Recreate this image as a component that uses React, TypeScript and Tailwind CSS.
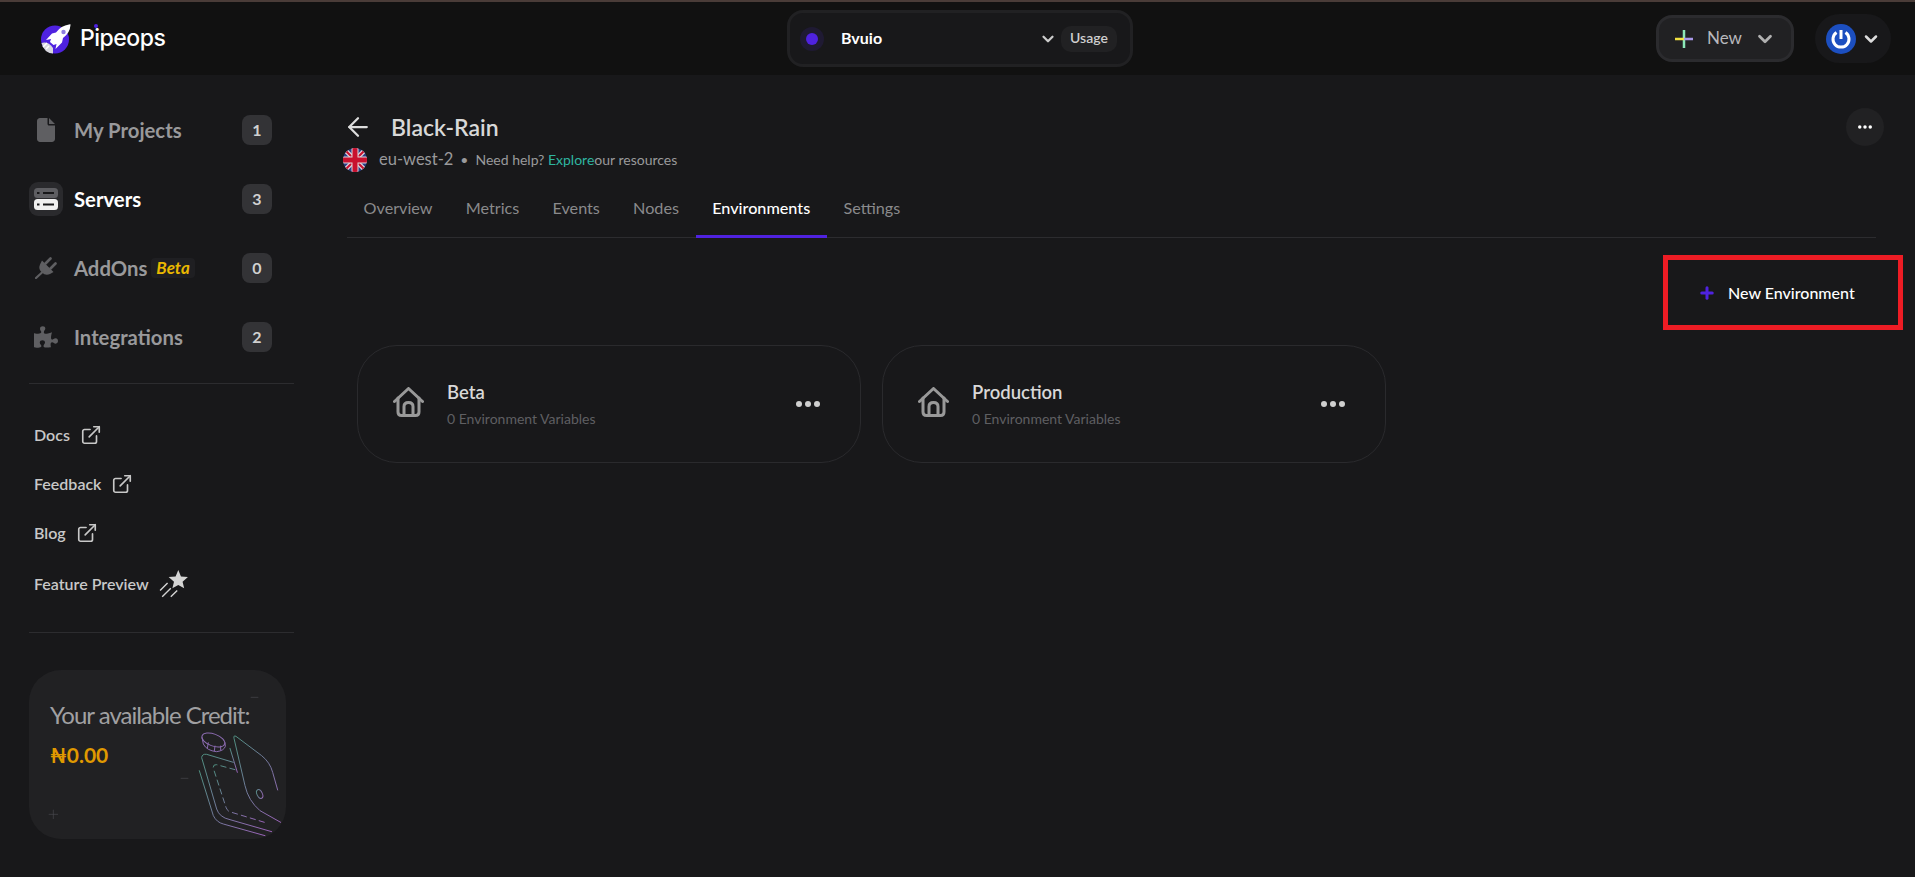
import React from 'react';
import { FaFile } from 'react-icons/fa6';
import { FaPuzzlePiece } from 'react-icons/fa';
import { ArrowLeft, ChevronDown, ExternalLink, Plus } from 'lucide-react';

const Dots: React.FC<{ className?: string }> = ({ className }) => (
  <svg viewBox="0 0 24 6" className={className} fill="currentColor">
    <circle cx="3" cy="3" r="3" />
    <circle cx="12" cy="3" r="3" />
    <circle cx="21" cy="3" r="3" />
  </svg>
);

const Logo = () => (
  <svg viewBox="0 0 32 30" className="w-[32px] h-[30px]">
    <circle cx="15" cy="15.500" r="14" fill="#4f22e0" />
    <path d="M1.500 19 Q8 17 13 24 L13 29.500 Q4 29 1.500 19Z" fill="#d8d8de" />
    <path d="M30.500 1 Q31 0 29 0.500 Q21 1.500 16 8.500 L12 9.500 L6 16 L11 15 L10 18 L13.500 21 L16.500 20 L15.500 25 L22 18.500 L23 14 Q30 9 30.500 1Z" fill="#fff" />
    <circle cx="23.500" cy="8" r="2.200" fill="#8f7fe0" />
    <path d="M7 19 L3 23 M9 22 L6 25" stroke="#fff" strokeWidth="1.500" />
  </svg>
);

const ServerIcon = () => (
  <svg viewBox="0 0 24 22" className="w-[24px] h-[22px]">
    <rect x="0" y="0" width="24" height="10" rx="3.500" fill="#5e5e62" />
    <rect x="0" y="11" width="24" height="11" rx="3.500" fill="#f0f0f0" />
    <rect x="3" y="4" width="2.500" height="2" fill="#18181a" />
    <rect x="9" y="4" width="11" height="2" fill="#18181a" />
    <rect x="3" y="15.500" width="2.500" height="2" fill="#18181a" />
    <rect x="9" y="15.500" width="11" height="2" fill="#18181a" />
  </svg>
);

const PlugIcon = () => (
  <svg viewBox="0 0 22 22" className="w-[22px] h-[22px]" fill="none">
    <path d="M7 3.500 L18.500 15 L15 17 Q10.500 19 7 15.500 Q3 12 5 7.500Z" fill="#5f5f62" />
    <path d="M10.500 6.500 L15.500 1.500 M15.500 11.500 L20.500 6.500" stroke="#5f5f62" strokeWidth="2.600" strokeLinecap="round" />
    <path d="M7 15.500 L1 21" stroke="#5f5f62" strokeWidth="2.200" strokeLinecap="round" />
  </svg>
);

const HomeIcon = () => (
  <svg viewBox="0 0 31 30" className="w-[31px] h-[30px] -mt-[4px] shrink-0" fill="none" stroke="#999999" strokeWidth="3" strokeLinejoin="round" strokeLinecap="round">
    <path d="M1.500 14.500 L15.500 1.500 L29.500 14.500" />
    <path d="M5 11 V25 Q5 28.500 8.500 28.500 H22.500 Q26 28.500 26 25 V11" />
    <path d="M11 28.500 V19.500 Q11 15.500 15.500 15.500 Q20 15.500 20 19.500 V28.500" />
  </svg>
);

const PowerAvatar = () => (
  <svg viewBox="0 0 30 30" className="w-[30px] h-[30px]">
    <circle cx="15" cy="15" r="15" fill="#1c4fc0" />
    <path d="M10.500 8.500 A8 8 0 1 0 19.500 8.500" fill="none" stroke="#fff" strokeWidth="3" />
    <path d="M15 6 L15 15" stroke="#fff" strokeWidth="3" />
  </svg>
);

const UkFlag = () => (
  <svg viewBox="0 0 24 24" className="w-[24px] h-[24px]">
    <defs>
      <clipPath id="flagclip">
        <circle cx="12" cy="12" r="12" />
      </clipPath>
    </defs>
    <g clipPath="url(#flagclip)">
      <rect width="24" height="24" fill="#2b3f86" />
      <path d="M0 0 L24 24 M24 0 L0 24" stroke="#e0d4da" strokeWidth="4.500" />
      <path d="M0 0 L24 24 M24 0 L0 24" stroke="#c8102e" strokeWidth="2" />
      <path d="M12 0 V24 M0 12 H24" stroke="#e0d4da" strokeWidth="7" />
      <path d="M12 0 V24 M0 12 H24" stroke="#c8102e" strokeWidth="5" />
    </g>
  </svg>
);

const StarTrail = () => (
  <svg viewBox="0 0 28 28" className="w-[30px] h-[30px]" fill="none">
    <path d="M18 1 L20.500 7 L27 7.500 L22 12 L23.500 18 L18 15 L12.500 18 L14 12 L9 7.500 L15.500 7Z" fill="#d4d4d4" />
    <path d="M1 20 L8 13 M3 26 L11 18 M11 26 L17 20" stroke="#d4d4d4" strokeWidth="1.300" />
  </svg>
);

const WalletArt = () => (
  <svg viewBox="87 63 771 507" className="absolute inset-0 w-full h-full pointer-events-none" fill="none" strokeWidth="3">
    <defs>
      <linearGradient id="walletline" x1="0" y1="0" x2="1" y2="1">
        <stop offset="0" stopColor="#4f8f80" />
        <stop offset="1" stopColor="#9a62b8" />
      </linearGradient>
    </defs>
    <g stroke="url(#walletline)" strokeLinecap="round">
      <path d="M690 298 L712 370" />
      <path d="M833 423 L818 370 Q810 340 785 320 L708 262 Q700 258 702 268 L735 410 Q745 455 780 485 L842 520" />
      <path d="M700 340 L620 316 Q606 314 605 326 L650 480 Q658 505 690 512 L815 548" />
      <path d="M598 365 L640 500 Q650 520 670 525 L795 560" />
      <path d="M705 362 L650 347 Q638 345 640 358 L678 475 Q682 488 695 490 L800 522" strokeDasharray="16 12" />
      <ellipse cx="779" cy="435" rx="8" ry="14" transform="rotate(-25 779 435)" />
    </g>
    <g stroke="#8b6bb0">
      <ellipse cx="640" cy="273" rx="36" ry="18" transform="rotate(20 640 273)" />
      <path d="M606 265 L610 285 Q620 305 650 308 Q672 305 676 292 L675 280" />
      <path d="M625 280 L622 298 M645 290 L643 307 M662 290 L662 304" />
    </g>
    <g stroke="#4a4a4e" strokeWidth="2">
      <path d="M160 482 V510 M146 496 H174" />
      <path d="M752 145 H775" />
      <path d="M542 388 H565" />
    </g>
  </svg>
);

const NavItem: React.FC<{ icon: React.ReactNode; label: string; count: number; active?: boolean; tag?: boolean }> = ({ icon, label, count, active, tag }) => (
  <div className="h-[69px] flex items-center">
    <div className="w-[34px] mr-[11px] flex justify-center">{icon}</div>
    <span className={`pt-[2px] text-[20.300px] font-bold ${active ? 'text-white' : 'text-[#99999b]'}`}>{label}</span>
    {tag && <span className="ml-[4px] h-[20px] px-[5px] rounded-[4px] bg-[#1f1f22] text-[#e9b800] text-[17px] font-bold italic leading-[20px]">Beta</span>}
    <span className="ml-auto mr-[22px] w-[30px] h-[30px] rounded-[8px] bg-[#333336] text-[#d0d0d0] text-[16px] font-bold flex items-center justify-center">{count}</span>
  </div>
);

const LinkItem: React.FC<{ label: string; icon?: React.ReactNode; className?: string }> = ({ label, icon, className }) => (
  <div className={`h-[49px] flex items-center gap-[10px] pl-[5px] text-[16px] font-semibold text-[#c8c8c8] ${className ?? ''}`}>
    <span>{label}</span>
    {icon ?? <ExternalLink className="w-[22px] h-[22px]" strokeWidth={1.8} />}
  </div>
);

const EnvCard: React.FC<{ name: string }> = ({ name }) => (
  <div className="w-[504px] h-[118px] rounded-[40px] border border-[#2a2a2d] bg-[#18181a] flex items-center pl-[35px] pr-[40px]">
    <HomeIcon />
    <div className="ml-[23px]">
      <div className="text-[18.500px] font-semibold text-[#d8d8d8] leading-[24px]">{name}</div>
      <div className="text-[14px] text-[#5f5f62] leading-[18px] mt-[6px]">0 Environment Variables</div>
    </div>
    <Dots className="ml-auto w-[24px] h-[6px] text-[#cfcfcf]" />
  </div>
);

export default function App() {
  const tabs = ['Overview', 'Metrics', 'Events', 'Nodes', 'Environments', 'Settings'];

  return (
    <div className="h-screen overflow-hidden bg-[#18181a] flex flex-col font-['Lato','Liberation_Sans',sans-serif]">
      <header className="h-[75px] shrink-0 bg-[#111111] border-t-2 border-[#4a3c38] flex items-center pl-[40px] pr-[24px]">
        <div className="flex items-center gap-[8px] w-[747px]">
          <Logo />
          <span className="relative text-[23px] font-medium text-white tracking-[-0.5px] font-['Inter',sans-serif]">
            Pipeops
            <span className="absolute left-[14px] top-[3px] w-[4px] h-[4px] rounded-full bg-[#4f22e0]" />
          </span>
        </div>
        <div className="w-[346px] h-[57px] rounded-[16px] border-[3px] border-[#212123] bg-[#18181a] flex items-center pl-[10px] pr-[13px]">
          <span className="w-[24px] h-[24px] rounded-full bg-[#1f1a33] flex items-center justify-center">
            <span className="w-[12px] h-[12px] rounded-full bg-[#4f22e0]" />
          </span>
          <span className="ml-[17px] pb-[2px] text-[16px] font-bold text-white">Bvuio</span>
          <ChevronDown className="ml-auto w-[18px] h-[18px] text-[#cccccc]" strokeWidth={3} />
          <span className="ml-[4px] w-[56px] h-[26px] pb-[2px] rounded-[10px] bg-[#212123] text-[14px] font-semibold text-[#cfcfcf] flex items-center justify-center">Usage</span>
        </div>
        <div className="ml-auto w-[138px] h-[47px] rounded-[16px] border-[3px] border-[#2b2b2e] bg-[#212123] flex items-center pl-[16px]">
          <svg viewBox="0 0 18 18" className="w-[18px] h-[18px]">
            <path d="M9 0 V18" stroke="#8ce8b8" strokeWidth="2.500" />
            <path d="M0 9 H9" stroke="#f0e040" strokeWidth="2.500" />
            <path d="M9 9 H18" stroke="#a898e8" strokeWidth="2.500" />
          </svg>
          <span className="ml-[14px] pb-[2px] text-[17px] text-[#b8b8bc]">New</span>
          <ChevronDown className="ml-[12px] w-[22px] h-[22px] text-[#b0b0b0]" strokeWidth={3} />
        </div>
        <div className="ml-[21px] w-[76px] h-[49px] rounded-full bg-[#18181a] flex items-center pl-[11px] gap-[5px]">
          <PowerAvatar />
          <ChevronDown className="w-[20px] h-[20px] text-[#dddddd]" strokeWidth={3} />
        </div>
      </header>

      <div className="flex-1 flex min-h-0">
        <aside className="w-[323px] shrink-0 pl-[29px] pr-[29px] pt-[20px]">
          <NavItem icon={<FaFile className="w-[18px] h-[24px] text-[#5f5f62]" />} label="My Projects" count={1} />
          <NavItem
            icon={
              <span className="w-[34px] h-[34px] rounded-[9px] bg-[#2a2a2d] flex items-center justify-center">
                <ServerIcon />
              </span>
            }
            label="Servers"
            count={3}
            active
          />
          <NavItem icon={<PlugIcon />} label="AddOns" count={0} tag />
          <NavItem icon={<FaPuzzlePiece className="w-[24px] h-[24px] text-[#5f5f62]" />} label="Integrations" count={2} />
          <div className="mt-[12px] border-t border-[#2c2c2f]" />
          <div className="mt-[26px]">
            <LinkItem label="Docs" />
            <LinkItem label="Feedback" />
            <LinkItem label="Blog" />
            <LinkItem label="Feature Preview" icon={<StarTrail />} className="mt-[2px]" />
          </div>
          <div className="mt-[24px] border-t border-[#2c2c2f]" />
          <div className="relative mt-[37px] w-[257px] h-[169px] rounded-[32px] bg-[#212123] overflow-hidden pl-[21px] pt-[30px]">
            <WalletArt />
            <div className="text-[24px] text-[#a0a0a2] tracking-[-1px] leading-[30px]">Your available Credit:</div>
            <div className="mt-[12px] text-[21px] font-bold leading-[26px] text-[#e09a00]">₦0.00</div>
          </div>
        </aside>

        <main className="flex-1 min-w-0 pl-[24px] pr-[39px]">
          <div className="flex items-start pt-[33px]">
            <div>
              <div className="flex items-center h-[38px]">
                <ArrowLeft className="w-[30px] h-[30px] text-[#dddddd] -ml-[4px]" strokeWidth={1.8} />
                <h1 className="ml-[18px] text-[23px] font-semibold text-[#d8d8d8]">Black-Rain</h1>
              </div>
              <div className="flex items-center h-[26px] mt-[1px] pb-[1px] text-[14px] text-[#9a9a9c]">
                <span className="-ml-[4px]"><UkFlag /></span>
                <span className="ml-[12px] text-[16.500px]">eu-west-2</span>
                <span className="mx-[7px]">•</span>
                <span>Need help? <span className="text-[#2fb5a0]">Explore</span>our resources</span>
              </div>
            </div>
            <div className="ml-auto w-[38px] h-[38px] rounded-full bg-[#212123] flex items-center justify-center -mr-[8px]">
              <Dots className="w-[14px] h-[4px] text-white" />
            </div>
          </div>

          <nav className="mt-[15px] h-[50px] border-b border-[#2c2c2f] flex items-stretch">
            {tabs.map((tab) => (
              <div
                key={tab}
                className={`px-[16.600px] pb-[7px] flex items-center text-[16.200px] border-b-[3px] -mb-px ${tab === 'Environments' ? 'border-[#4f22e0] text-white font-medium' : 'border-transparent text-[#8a8a8c]'}`}
              >
                {tab}
              </div>
            ))}
          </nav>

          <div className="flex justify-end mt-[17px] -mr-[27px]">
            <div className="w-[240px] h-[75px] border-[5px] border-[#ed1c24] flex items-center pl-[30px] text-[16px] font-medium text-white">
              <Plus className="w-[18px] h-[18px] text-[#4f22e0]" strokeWidth={4} />
              <span className="ml-[12px]">New Environment</span>
            </div>
          </div>

          <div className="mt-[15px] ml-[10px] flex gap-[21px]">
            <EnvCard name="Beta" />
            <EnvCard name="Production" />
          </div>
        </main>
      </div>
    </div>
  );
}
